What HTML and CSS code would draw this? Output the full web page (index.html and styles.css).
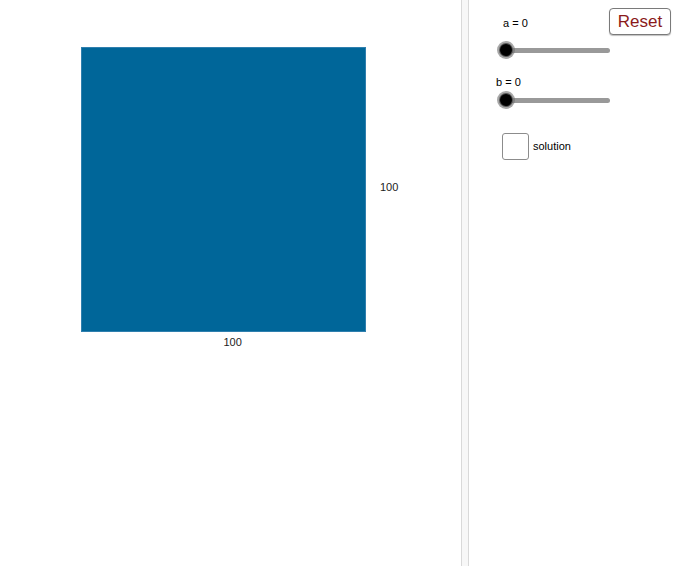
FILE: index.html
```html
<!DOCTYPE html>
<html>
<head>
<meta charset="utf-8">
<link rel="stylesheet" href="styles.css">
</head>
<body>
<div class="app">
  <div class="graphics">
    <svg class="canvas" width="461" height="568" viewBox="0 0 461 568">
      <rect x="81.5" y="47.5" width="284" height="284" fill="#006699" stroke="#2f7fae" stroke-width="1"/>
      <text x="380" y="190.5" class="lbl">100</text>
      <text x="223.5" y="346" class="lbl">100</text>
    </svg>
  </div>
  <div class="divider"></div>
  <div class="panel">
    <button class="reset">Reset</button>
    <div class="label label-a">a = 0</div>
    <div class="slider slider-a"><div class="track"></div><div class="knob"></div></div>
    <div class="label label-b">b = 0</div>
    <div class="slider slider-b"><div class="track"></div><div class="knob"></div></div>
    <div class="check-row">
      <div class="box"></div>
      <span class="check-text">solution</span>
    </div>
  </div>
</div>
</body>
</html>
```
FILE: styles.css
```css
html, body {
  margin: 0;
  padding: 0;
  background: #fff;
}
body {
  font-family: "Liberation Sans", Arial, sans-serif;
  color: #000;
}
.app {
  display: flex;
  width: 682px;
  height: 568px;
  overflow: hidden;
}
.graphics {
  width: 461px;
  height: 568px;
  flex: none;
}
.canvas {
  display: block;
}
.lbl {
  font-family: "Liberation Sans", Arial, sans-serif;
  font-size: 11px;
  fill: #222;
}
.divider {
  flex: none;
  width: 6px;
  height: 566px;
  background: #f7f7f7;
  border-left: 1px solid #d9d9d9;
  border-right: 1px solid #d9d9d9;
}
.panel {
  position: relative;
  flex: 1;
  display: flex;
  flex-direction: column;
  align-items: flex-start;
}
.reset {
  position: absolute;
  left: 140px;
  top: 8px;
  width: 62px;
  height: 27px;
  box-sizing: border-box;
  background: #fff;
  border: 1px solid #7a7a7a;
  border-radius: 4px;
  box-shadow: 0 1px 1px rgba(0,0,0,0.25);
  color: #8b1a1a;
  font-family: "Liberation Sans", Arial, sans-serif;
  font-size: 17px;
  padding: 0;
  line-height: 23px;
}
.label {
  font-size: 11px;
  line-height: 13px;
  height: 13px;
}
.label-a {
  margin-top: 17px;
  margin-left: 34px;
}
.label-b {
  margin-top: 17px;
  margin-left: 27px;
}
.slider {
  position: relative;
  width: 113px;
  height: 18px;
  margin-left: 28px;
}
.slider-a { margin-top: 11px; }
.slider-b { margin-top: 2px; }
.track {
  position: absolute;
  left: 9px;
  right: 0;
  top: 6.5px;
  height: 5px;
  border-radius: 2.5px;
  background: #999;
}
.knob {
  position: absolute;
  left: 0;
  top: 0;
  width: 18px;
  height: 18px;
  border-radius: 50%;
  background: rgba(110,110,110,0.6);
}
.knob::after {
  content: "";
  position: absolute;
  left: 3px;
  top: 3px;
  width: 12px;
  height: 12px;
  border-radius: 50%;
  background: #000;
  box-shadow: 0 0 0 1px #555;
}
.check-row {
  display: flex;
  align-items: center;
  margin-top: 24px;
  margin-left: 33px;
}
.box {
  width: 25px;
  height: 25px;
  border: 1px solid #8c8c8c;
  border-radius: 3px;
  background: #fff;
}
.check-text {
  margin-left: 4px;
  font-size: 11px;
  line-height: 13px;
}
```
